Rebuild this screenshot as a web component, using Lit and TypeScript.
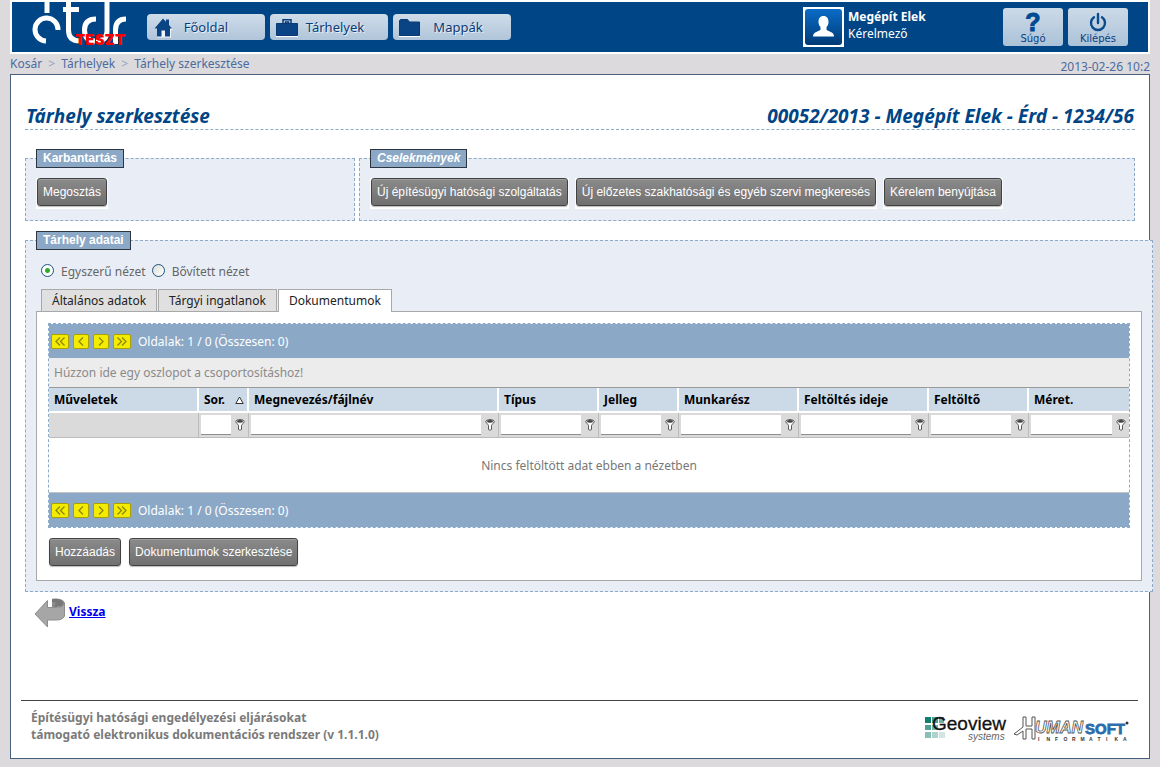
import { LitElement, html, svg, css } from "lit";
import { customElement, state } from "lit/decorators.js";

type Column = { key: string; title: string; sorted?: boolean };

const COLUMNS: Column[] = [
  { key: "muveletek", title: "Műveletek" },
  { key: "sor", title: "Sor.", sorted: true },
  { key: "nev", title: "Megnevezés/fájlnév" },
  { key: "tipus", title: "Típus" },
  { key: "jelleg", title: "Jelleg" },
  { key: "munkaresz", title: "Munkarész" },
  { key: "ido", title: "Feltöltés ideje" },
  { key: "feltolto", title: "Feltöltő" },
  { key: "meret", title: "Méret." },
];

const homeIcon = svg`<svg class="nav-icon" width="24" height="24" viewBox="0 0 24 24" aria-hidden="true">
  <path fill="#fff" opacity=".8" d="M5 22.500V14H3.500L12 5l9 10h-2v7.500z"/>
  <path fill="#0a4484" d="M11 3.500 2.500 13.500H5v8h4.500v-6h3.500v6h5v-8h2L17 10V4.500h-3v2.200z"/></svg>`;
const caseIcon = svg`<svg class="nav-icon" width="24" height="24" viewBox="0 0 24 24" aria-hidden="true">
  <path fill="none" stroke="#0a3a74" stroke-width="1.500" d="M8 8V4.700h8V8M10.500 8.500V7h3v1.500"/>
  <path fill="#0a4484" stroke="#0a3a74" d="M1.500 8.500h21v12h-21z"/><path stroke="#fff" d="M1 21.500h22"/></svg>`;
const folderIcon = svg`<svg class="nav-icon" width="24" height="24" viewBox="0 0 24 24" aria-hidden="true">
  <path fill="#0a4484" stroke="#0a3a74" d="M1.500 20.500v-15l1-1h7l2 2.500h10v13.500z"/><path stroke="#fff" d="M1 21.500h21"/></svg>`;
const filterIcon = svg`<svg width="10" height="12" viewBox="0 0 10 12" aria-hidden="true">
  <path fill="#fff" stroke="#555" d="M.8 2.800C.8 1.400 2.600.6 5 .6s4.200.8 4.200 2.200C9.200 4.400 6.500 5 6.500 6.500V10.500c-.5.7-2.500.7-3 0V6.500C3.500 5 .8 4.400.8 2.800z"/>
  <ellipse cx="5" cy="2.400" rx="3" ry="1.300" fill="#444"/></svg>`;
const backIcon = svg`<svg class="back-icon" width="32" height="30" viewBox="0 0 32 30" aria-hidden="true">
  <path fill="#8a8a8a" d="M18 1c8-1 13 1 13 5v12H25V9c0-2-2-3-4-2v2h-3z"/>
  <path fill="#a6a6a6" stroke="#8d8d8d" d="M13.500 2.500v7H21c5 0 8.500-1 9.500-4V17c0 3-3 5-9 5h-8v7L1 16z"/>
  <path fill="#777" d="M18 1c6-1 11 1 11 4 0 2-3 4-8 4V6c2 0 2-2-3-2z"/></svg>`;

@customElement("image-button")
class ImageButton extends LitElement {
  static styles = css`
    :host { display: block; background: #fff; padding: 0 1px 3px; }
    .button {
      display: block; height: 28px; padding: 0 5px; border: 1px solid #424242; border-radius: 3px;
      background: linear-gradient(#8a8a8a, #707070); box-shadow: inset 0 1px #a0a0a0, 0 1px 1px #bbb;
      color: #fff; font: 12px/26px "Liberation Sans", Arial, sans-serif; white-space: nowrap; cursor: pointer;
    }
  `;
  render() {
    return html`<button class="button" type="button"><slot></slot></button>`;
  }
}

@customElement("grid-pager")
class GridPager extends LitElement {
  static styles = css`
    :host {
      display: flex; align-items: center; gap: 4px; height: 34px; padding: 0 2px;
      background: #8ba9c7; color: #fff; font: 12px/16px "Noto Sans", Tahoma, sans-serif;
    }
    .step {
      display: flex; align-items: center; justify-content: center; width: 16px; height: 15px; padding: 0;
      border: 1px solid #aaa000; border-radius: 2px; background: #f4ec00; cursor: pointer;
    }
    .wide { width: 18px; }
    .step path { fill: none; stroke: #8f8700; stroke-width: 1.300; }
    .summary { margin-left: 3px; padding-top: 2px; }
  `;
  private step(label: string, d: string, wide = false) {
    return html`<button class="step ${wide ? "wide" : ""}" type="button" aria-label=${label}>
      <svg width="12" height="9" viewBox="0 0 12 9" aria-hidden="true">${svg`<path d=${d}></path>`}</svg>
    </button>`;
  }
  render() {
    return html`
      ${this.step("Első oldal", "M6 .5 2 4.500l4 4M10.500.5l-4 4 4 4", true)}
      ${this.step("Előző oldal", "M8 .5 4 4.500l4 4")}
      ${this.step("Következő oldal", "M4 .5l4 4-4 4")}
      ${this.step("Utolsó oldal", "M1.500.5l4 4-4 4M6 .5l4 4-4 4", true)}
      <span class="summary">Oldalak: 1 / 0 (Összesen: 0)</span>
    `;
  }
}

@customElement("app-root")
class AppRoot extends LitElement {
  @state() private view = "simple";
  @state() private tab = 2;

  static styles = css`
    :host {
      display: flex; flex-direction: column; box-sizing: border-box; min-height: 100vh; padding: 0 10px 8px;
      background: #dcdadc; font: 12px/16px "Noto Sans", Tahoma, sans-serif; color: #333;
    }
    * { box-sizing: border-box; }
    a { text-decoration: none; }

    .header {
      display: flex; align-items: flex-start; height: 54px; padding-right: 20px;
      border: 2px solid #fff; background: #004585;
    }
    .brand { position: relative; width: 135px; height: 50px; flex: none; }
    .brand-mark { display: block; }
    .stage {
      position: absolute; left: 63px; top: 29px; color: #f00;
      font: 900 15px/18px Inter, "Liberation Sans", sans-serif;
    }
    .nav { display: flex; gap: 5px; padding-top: 12px; }
    .nav-link {
      display: flex; align-items: center; width: 118px; height: 26px; padding: 0 17px 0 5px; border-radius: 4px;
      background: linear-gradient(#cfdce9, #b0c5da); color: #0b3c78; font-size: 13px; text-shadow: 1px 1px #e8eff6;
    }
    .nav-link.home { padding-right: 29px; }
    .nav-icon { flex: none; }
    .nav-text { flex: 1; text-align: center; }
    .user { display: flex; gap: 4px; margin-left: auto; padding-top: 5px; color: #fff; line-height: 17px; }
    .user-name { font-weight: 700; }
    .user-text { width: 155px; padding-top: 1px; }
    .tools { display: flex; gap: 5px; padding-top: 6px; }
    .tool {
      display: flex; flex-direction: column; align-items: center; width: 60px; height: 38px; padding: 3px 0 0;
      border: 0; border-radius: 3px; background: linear-gradient(#cddae7, #abc2d8); color: #0b4080;
      font: 10px/12px "DejaVu Sans", Verdana, sans-serif; cursor: pointer;
    }
    .tool-mark {
      height: 22px; font: 700 25px/22px "Liberation Sans", sans-serif; color: #004a92;
      -webkit-text-stroke: 1px #004a92;
    }

    .crumbs { display: flex; justify-content: space-between; height: 20px; color: #4b6ca0; line-height: 20px; }
    .crumb { color: #4b6ca0; }
    .sep { padding: 0 3px; color: #8fa2c0; }
    .date { padding-top: 3px; }

    .main {
      display: flex; flex-direction: column; flex: 1; padding: 29px 14px 0; border: 1px solid #46607e; background: #fff;
    }
    .title-row {
      display: flex; justify-content: space-between; margin-bottom: 19px; padding: 0 1px;
      border-bottom: 1px dashed #8dabc9; color: #004585;
    }
    .title { margin: 0; font: italic 700 19px/25px "Noto Sans", sans-serif; }

    .groups { display: grid; grid-template-columns: 330fr 776fr; gap: 4px; margin-bottom: 10px; }
    .group { min-width: 0; margin: 0; padding: 10px 10px 11px; border: 1px dashed #8dabc9; background: #e9eef6; }
    .group-title {
      height: 19px; padding: 0 6px; border: 1px solid #2d3640; background: #8ba9c7; color: #fff;
      font: 700 12px/17px "Liberation Sans", Arial, sans-serif;
    }
    .slanted { font-style: italic; }
    .buttons { display: flex; flex-wrap: wrap; gap: 6px; }
    .group.wide-group { margin-right: -18px; padding-bottom: 10px; }

    .views { display: flex; align-items: center; gap: 6px; height: 23px; padding-left: 5px; color: #666; }
    .view { display: flex; align-items: center; gap: 7px; }
    .radio {
      appearance: none; width: 13px; height: 13px; margin: 0 0 3px; border: 1px solid #1d5281; border-radius: 50%;
      background: linear-gradient(135deg, #dcdcd7, #fff);
    }
    .radio:checked { background: radial-gradient(circle, #2cae2c 0 2px, #fff 3px); }

    .tabs { display: flex; align-items: flex-start; gap: 1px; margin: 6px 0 -1px 5px; position: relative; }
    .tab {
      height: 22px; padding: 0 10px; border: 1px solid #a8a8a8; border-bottom: 0; background: #e0e0e0;
      color: #222; font: 12px/21px "Noto Sans", Tahoma, sans-serif; cursor: pointer;
    }
    .tab.active { height: 23px; padding-bottom: 1px; background: #fff; }
    .panel { padding: 11px; border: 1px solid #a8a8a8; background: #fff; }

    .grid { margin-bottom: 10px; border: 1px dashed #8dabc9; }
    .group-hint { height: 30px; padding: 0 5px; border-bottom: 1px solid #9a9a9a; background: #ececec; color: #8a8a8a; line-height: 29px; }
    .table { width: 100%; table-layout: fixed; border-collapse: separate; border-spacing: 0; }
    .w-muveletek { width: 150px; } .w-sor { width: 50px; } .w-tipus { width: 100px; } .w-jelleg { width: 80px; }
    .w-munkaresz { width: 120px; } .w-ido { width: 130px; } .w-feltolto { width: 100px; } .w-meret { width: 100px; }
    .head {
      height: 25px; padding: 0 0 0 5px; border-right: 2px solid #fff; border-bottom: 2px solid #fff;
      background: #ccdae8; color: #000; font-weight: 700; line-height: 23px; text-align: left; white-space: nowrap;
    }
    .head:last-child { border-right: 0; }
    .head-inner { display: flex; align-items: center; justify-content: space-between; padding-right: 3px; }
    .filter { height: 25px; padding: 0; border-right: 1px solid #bcbcbc; border-bottom: 1px solid #bcbcbc; background: #dadada; }
    .filter:last-child { border-right: 0; }
    .filter-inner { display: flex; align-items: center; gap: 4px; padding: 0 3px 0 2px; }
    .filter-box { flex: 1; min-width: 0; height: 20px; padding: 0 2px; border: 0; border-bottom: 1px solid #8e8e8e; background: #fff; font: inherit; }
    .filter-button { display: flex; padding: 0; border: 0; background: none; cursor: pointer; }
    .empty { height: 55px; padding: 2px 0 0; border-bottom: 1px solid #c4c4c4; color: #777; text-align: center; }

    .back { display: flex; align-items: center; gap: 3px; align-self: flex-start; margin: 6px 0 0 9px; }
    .back-text { padding-bottom: 2px; color: #00e; font-weight: 700; text-decoration: underline; }

    .footer {
      display: flex; justify-content: space-between; align-items: flex-start; margin: auto -3px 0 -4px; padding: 8px 8px 15px 10px;
      border-top: 1px solid #444; color: #7a7a7a; font-weight: 700; line-height: 17px;
    }
    .owners { display: flex; gap: 4px; padding-top: 7px; }
    .owner { overflow: visible; }
  `;

  private renderHeader() {
    return html`<header class="header">
      <div class="brand">
        <svg class="brand-mark" width="135" height="50" viewBox="12 2 135 50" role="img" aria-label="étdr">
          <g fill="none" stroke="#fff" stroke-width="5">
            <path d="M47 0V13M58 30A11.500 11.500 0 1 0 46 41"/>
            <path d="M68.500 0V30Q68.500 41 80 41M63 9.500H79"/>
            <path d="M96 19Q84.500 19 84.500 30Q84.500 41 95 41M107 0V31Q107 41 96 41"/>
            <path d="M115.500 44V30Q115.500 19 126 19"/>
          </g>
        </svg>
        <span class="stage">TESZT</span>
      </div>
      <nav class="nav">
        <a class="nav-link home" href="#fooldal">${homeIcon}<span class="nav-text">Főoldal</span></a>
        <a class="nav-link" href="#tarhelyek">${caseIcon}<span class="nav-text">Tárhelyek</span></a>
        <a class="nav-link" href="#mappak">${folderIcon}<span class="nav-text">Mappák</span></a>
      </nav>
      <div class="user">
        <svg width="41" height="40" viewBox="0 0 41 40" aria-hidden="true">
          <defs><linearGradient id="avatar" x2="0" y2="1"><stop stop-color="#0a6cc8"/><stop offset="1" stop-color="#003a75"/></linearGradient></defs>
          <path fill="#fff" d="M0 0h41v40H0z"/>
          <rect x="2" y="2" width="37" height="36" rx="3" fill="url(#avatar)"/>
          <path fill="#fff" d="M20.500 9c3.500 0 5 2.500 5 6 0 2.500-1 4-2 5v2.500c1 2 7.500 2 7.500 7H10c0-5 6.500-5 7.500-7V20c-1-1-2-2.500-2-5 0-3.500 1.500-6 5-6z"/>
        </svg>
        <div class="user-text"><div class="user-name">Megépít Elek</div><div>Kérelmező</div></div>
      </div>
      <div class="tools">
        <button class="tool" type="button"><span class="tool-mark" aria-hidden="true">?</span>Súgó</button>
        <button class="tool" type="button">
          <svg width="18" height="22" viewBox="0 0 18 22" aria-hidden="true">
            <path fill="none" stroke="#0b4a8c" stroke-width="2.400" stroke-linecap="round" d="M9 3v9M5 6.200a7 7 0 1 0 8 0"/>
          </svg>Kilépés
        </button>
      </div>
    </header>`;
  }

  private renderGrid() {
    return html`<div class="grid">
      <grid-pager></grid-pager>
      <div class="group-hint">Húzzon ide egy oszlopot a csoportosításhoz!</div>
      <table class="table">
        <colgroup>${COLUMNS.map((c) => html`<col class="w-${c.key}" />`)}</colgroup>
        <thead>
          <tr>
            ${COLUMNS.map((c) => html`<th class="head" scope="col"><div class="head-inner">${c.title}${c.sorted
              ? svg`<svg width="9" height="8" viewBox="0 0 9 8" aria-hidden="true"><path fill="#fff" stroke="#333" d="M4.500 1 8.200 7.500H.8z"/></svg>`
              : ""}</div></th>`)}
          </tr>
          <tr>
            ${COLUMNS.map((c, i) => html`<td class="filter">${i === 0 ? "" : html`<div class="filter-inner">
              <input class="filter-box" type="text" aria-label=${"Szűrő: " + c.title} />
              <button class="filter-button" type="button" aria-label="Szűrés">${filterIcon}</button>
            </div>`}</td>`)}
          </tr>
        </thead>
        <tbody>
          <tr><td class="empty" colspan="9">Nincs feltöltött adat ebben a nézetben</td></tr>
        </tbody>
      </table>
      <grid-pager></grid-pager>
    </div>`;
  }

  private renderView(id: string, label: string) {
    return html`<label class="view"><input class="radio" type="radio" name="view" .checked=${this.view === id}
      @change=${() => (this.view = id)} />${label}</label>`;
  }

  render() {
    return html`
      ${this.renderHeader()}
      <div class="crumbs">
        <nav><a class="crumb" href="#kosar">Kosár</a> <span class="sep">&gt;</span> <a class="crumb" href="#tarhelyek">Tárhelyek</a>
          <span class="sep">&gt;</span> <a class="crumb" href="#szerkesztes">Tárhely szerkesztése</a></nav>
        <span class="date">2013-02-26 10:2</span>
      </div>
      <main class="main">
        <div class="title-row">
          <h1 class="title">Tárhely szerkesztése</h1>
          <h2 class="title">00052/2013 - Megépít Elek - Érd - 1234/56</h2>
        </div>
        <div class="groups">
          <fieldset class="group">
            <legend class="group-title">Karbantartás</legend>
            <div class="buttons"><image-button>Megosztás</image-button></div>
          </fieldset>
          <fieldset class="group">
            <legend class="group-title slanted">Cselekmények</legend>
            <div class="buttons">
              <image-button>Új építésügyi hatósági szolgáltatás</image-button>
              <image-button>Új előzetes szakhatósági és egyéb szervi megkeresés</image-button>
              <image-button>Kérelem benyújtása</image-button>
            </div>
          </fieldset>
        </div>
        <fieldset class="group wide-group">
          <legend class="group-title">Tárhely adatai</legend>
          <div class="views">${this.renderView("simple", "Egyszerű nézet")}${this.renderView("full", "Bővített nézet")}</div>
          <div class="tabs" role="tablist">
            ${["Általános adatok", "Tárgyi ingatlanok", "Dokumentumok"].map((t, i) => html`<button
              class="tab ${i === this.tab ? "active" : ""}" type="button" role="tab"
              aria-selected=${i === this.tab} @click=${() => (this.tab = i)}>${t}</button>`)}
          </div>
          <div class="panel">
            ${this.renderGrid()}
            <div class="buttons">
              <image-button>Hozzáadás</image-button>
              <image-button>Dokumentumok szerkesztése</image-button>
            </div>
          </div>
        </fieldset>
        <a class="back" href="#vissza">${backIcon}<span class="back-text">Vissza</span></a>
        <footer class="footer">
          <div>Építésügyi hatósági engedélyezési eljárásokat<br />támogató elektronikus dokumentációs rendszer (v 1.1.1.0)</div>
          <div class="owners">
            <svg class="owner" width="86" height="26" viewBox="0 0 86 26" role="img" aria-label="Geoview systems">
              <g fill="#12806f"><path d="M1 1h6v6H1z"/><path opacity=".75" d="M8 1h6v6H8zM1 9h6v5H1z"/><path opacity=".6" d="M8 9h6v5H8zM15 1h5v6h-5z"/>
              <path opacity=".5" d="M1 16h6v6H1z"/><path opacity=".35" d="M8 16h6v6H8z"/><path opacity=".2" d="M15 16h6v6h-6z"/></g>
              <text x="8" y="14" font-family="Liberation Sans" font-weight="400" font-size="19" fill="#111" stroke="#111" stroke-width=".3">Geoview</text>
              <text x="44" y="24" font-family="Liberation Sans" font-style="italic" font-weight="400" font-size="10" fill="#666">systems</text>
            </svg>
            <svg class="owner" width="116" height="26" viewBox="0 0 116 26" role="img" aria-label="HumanSoft Informatika">
              <path fill="#fff" stroke="#555" d="M0 18 9 11V1h3v9h6V1h3v22h-3V13h-6v10H9v-8l-6 4z"/>
              <text x="21" y="17" font-family="Liberation Sans" font-weight="700" font-style="italic" font-size="16" fill="#fff" stroke="#555" stroke-width=".8">UMAN</text>
              <text x="71" y="18" font-family="Liberation Sans" font-weight="700" font-size="15" fill="#2a6cab" stroke="#2a6cab" stroke-width=".8">SOFT</text>
              <circle cx="113" cy="7" r="1.500" fill="#333"/>
              <g font-family="Liberation Sans" font-weight="700" font-size="5" fill="#333">
                ${[..."INFORMATIKA"].map((ch, i) => svg`<text x=${24 + i * 8.5} y="25">${ch}</text>`)}
              </g>
            </svg>
          </div>
        </footer>
      </main>
    `;
  }
}
